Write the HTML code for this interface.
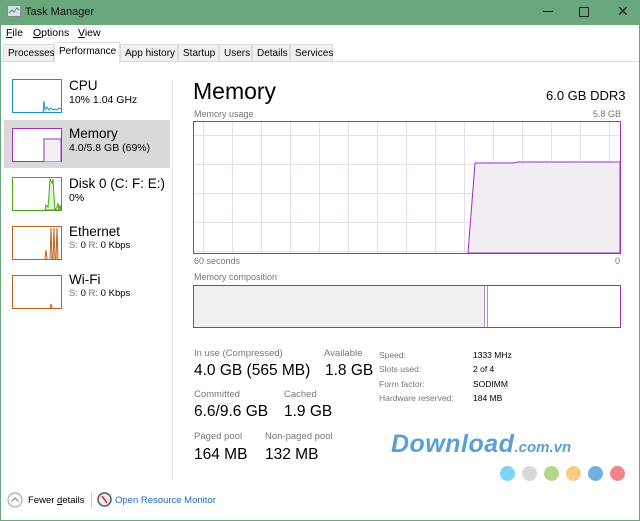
<!DOCTYPE html>
<html><head><meta charset="utf-8"><style>
*{margin:0;padding:0;box-sizing:border-box}
body{width:640px;height:521px;position:relative;background:#fff;font-family:"Liberation Sans",sans-serif;overflow:hidden;color:#000}
.a{position:absolute;white-space:nowrap}
.g{color:#777}
</style></head><body>
<div class="a" style="left:0;top:0;width:640px;height:25px;background:#6aa77c"></div>
<div class="a" style="left:0;top:25px;width:1px;height:496px;background:#6aa77c"></div>
<div class="a" style="left:639px;top:25px;width:1px;height:496px;background:#6aa77c"></div>
<div class="a" style="left:0;top:520px;width:640px;height:1px;background:#6aa77c"></div>
<svg class="a" style="left:7px;top:5px" width="14" height="13"><rect x="0.5" y="0.5" width="13" height="11" fill="#dde" stroke="#889"/><path d="M2 8 L5 5 L7 7 L10 3 L12 5" stroke="#2a6" fill="none"/></svg>
<div class="a" style="left:25px;top:6px;font-size:11px;color:#111">Task Manager</div>
<div class="a" style="left:543px;top:11px;width:10px;height:1px;background:#222"></div>
<div class="a" style="left:579px;top:7px;width:10px;height:10px;border:1px solid #222"></div>
<div class="a" style="left:617px;top:3px;font-size:14px;color:#222">✕</div>
<div class="a" style="left:6px;top:27px;font-size:10.5px"><u>F</u>ile</div>
<div class="a" style="left:33px;top:27px;font-size:10.5px"><u>O</u>ptions</div>
<div class="a" style="left:78px;top:27px;font-size:10.5px"><u>V</u>iew</div>
<div class="a" style="left:1px;top:61px;width:638px;height:1px;background:#ddd"></div>
<div class="a" style="left:1px;top:44px;width:637px;height:18px;font-size:10px">
<span class="a" style="left:2px;top:0;height:18px;width:51px;background:#f0f0f0;border:1px solid #ddd;padding:3px 0 0 4px">Processes</span>
<span class="a" style="left:53px;top:-2px;height:21px;width:66px;background:#fff;border:1px solid #ddd;border-bottom:none;padding:3px 0 0 4px">Performance</span>
<span class="a" style="left:119px;top:0;height:18px;width:58px;background:#f0f0f0;border:1px solid #ddd;padding:3px 0 0 4px">App history</span>
<span class="a" style="left:177px;top:0;height:18px;width:41px;background:#f0f0f0;border:1px solid #ddd;padding:3px 0 0 4px">Startup</span>
<span class="a" style="left:218px;top:0;height:18px;width:33px;background:#f0f0f0;border:1px solid #ddd;padding:3px 0 0 4px">Users</span>
<span class="a" style="left:251px;top:0;height:18px;width:38px;background:#f0f0f0;border:1px solid #ddd;padding:3px 0 0 4px">Details</span>
<span class="a" style="left:289px;top:0;height:18px;width:43px;background:#f0f0f0;border:1px solid #ddd;padding:3px 0 0 4px">Services</span>
</div>
<div class="a" style="left:172px;top:80px;width:1px;height:400px;background:#e6e6e6"></div>
<svg class="a" style="left:12px;top:79px" width="50" height="34"><rect x="0.5" y="0.5" width="49" height="33" fill="#fff" stroke="#1c8ccc"/><path d="M31 33 L32 22 L33 31 L35 28 L37 31 L39 29 L41 31 L43 30 L45 31 L47 29 L49 30" stroke="#1c8ccc" fill="none"/></svg>
<div class="a" style="left:69px;top:78px;font-size:13.5px">CPU</div>
<div class="a" style="left:69px;top:94px;font-size:10.5px">10% 1.04 GHz</div>
<div class="a" style="left:4px;top:120px;width:166px;height:48px;background:#d9d9d9"></div>
<svg class="a" style="left:12px;top:128px" width="50" height="34"><rect x="0.5" y="0.5" width="49" height="33" fill="#fff" stroke="#9b2fc4"/><path d="M32 34 L32 11 L49 11 L49 34 Z" fill="#f3f0f5" stroke="#9b2fc4"/></svg>
<div class="a" style="left:69px;top:126px;font-size:13.5px">Memory</div>
<div class="a" style="left:69px;top:142px;font-size:10.5px">4.0/5.8 GB (69%)</div>
<svg class="a" style="left:12px;top:177px" width="50" height="34"><rect x="0.5" y="0.5" width="49" height="33" fill="#fff" stroke="#4da618"/><path d="M33 33 L34 28 L36 30 L37 18 L38 2 L40 6 L41 2 L42 18 L43 33 L45 30 L46 26 L47 33 L48 28 L49 33 Z" fill="#dff0d6" stroke="#4da618"/></svg>
<div class="a" style="left:69px;top:176px;font-size:13.5px">Disk 0 (C: F: E:)</div>
<div class="a" style="left:69px;top:192px;font-size:10.5px">0%</div>
<svg class="a" style="left:12px;top:226px" width="50" height="34"><rect x="0.5" y="0.5" width="49" height="33" fill="#fff" stroke="#c0601a"/><path d="M33 33 L34 24 L35 33 M38 33 L39 2 L40 33 M41 33 L42 2 L43 33 M44 33 L45 2 L46 33" stroke="#c0601a" fill="none"/></svg>
<div class="a" style="left:69px;top:224px;font-size:13.5px">Ethernet</div>
<div class="a" style="left:69px;top:240px;font-size:9.5px"><span class="g">S:</span> 0 <span class="g">R:</span> 0 Kbps</div>
<svg class="a" style="left:12px;top:275px" width="50" height="34"><rect x="0.5" y="0.5" width="49" height="33" fill="#fff" stroke="#c0601a"/><path d="M38 33 L39 29 L40 33" stroke="#c0601a" fill="none"/></svg>
<div class="a" style="left:69px;top:272px;font-size:13.5px">Wi-Fi</div>
<div class="a" style="left:69px;top:288px;font-size:9.5px"><span class="g">S:</span> 0 <span class="g">R:</span> 0 Kbps</div>
<div class="a" style="left:193px;top:78px;font-size:23px">Memory</div>
<div class="a" style="left:546px;top:88px;font-size:13px">6.0 GB DDR3</div>
<div class="a g" style="left:194px;top:109px;font-size:9px">Memory usage</div>
<div class="a g" style="left:593px;top:109px;font-size:9px">5.8 GB</div>
<svg class="a" style="left:193px;top:121px" width="428" height="133">
<g stroke="#e6dfea" stroke-width="1">
<path d="M10.5 0V133M39.5 0V133M68.5 0V133M97.5 0V133M126.5 0V133M155.5 0V133M184.5 0V133M213.5 0V133M242.5 0V133M271.5 0V133M300.5 0V133M329.5 0V133M358.5 0V133M387.5 0V133M416.5 0V133"/>
<path d="M0 14.5H428M0 43.5H428M0 72.5H428M0 101.5H428M0 130.5H428"/>
</g>
<path d="M275 132 L282 42 L320 42 L325 41 L427 41 L427 132 Z" fill="#f1edf3" stroke="#9b2fc4"/>
<rect x="0.5" y="0.5" width="427" height="132" fill="none" stroke="#9b2fc4"/>
</svg>
<div class="a g" style="left:194px;top:256px;font-size:9px">60 seconds</div>
<div class="a g" style="left:615px;top:256px;font-size:9px">0</div>
<div class="a g" style="left:194px;top:272px;font-size:9px">Memory composition</div>
<svg class="a" style="left:193px;top:285px" width="428" height="43"><rect x="1" y="1" width="291" height="41" fill="#f1eff2"/><path d="M291.5 1V42M294.5 1V42" stroke="#b98ad0"/><rect x="0.5" y="0.5" width="427" height="42" fill="none" stroke="#9b2fc4"/></svg>
<div class="a g" style="left:194px;top:348px;font-size:9.5px">In use (Compressed)</div>
<div class="a" style="left:194px;top:362px;font-size:15.5px">4.0 GB (565 MB)</div>
<div class="a g" style="left:324px;top:348px;font-size:9.5px">Available</div>
<div class="a" style="left:325px;top:362px;font-size:15.5px">1.8 GB</div>
<div class="a g" style="left:194px;top:389px;font-size:9.5px">Committed</div>
<div class="a" style="left:194px;top:403px;font-size:15.5px">6.6/9.6 GB</div>
<div class="a g" style="left:284px;top:389px;font-size:9.5px">Cached</div>
<div class="a" style="left:284px;top:403px;font-size:15.5px">1.9 GB</div>
<div class="a g" style="left:194px;top:431px;font-size:9.5px">Paged pool</div>
<div class="a" style="left:194px;top:446px;font-size:15.5px">164 MB</div>
<div class="a g" style="left:265px;top:431px;font-size:9.5px">Non-paged pool</div>
<div class="a" style="left:265px;top:446px;font-size:15.5px">132 MB</div>
<div class="a g" style="left:379px;top:348px;font-size:8.5px;line-height:14.3px">Speed:<br>Slots used:<br>Form factor:<br>Hardware reserved:</div>
<div class="a" style="left:473px;top:348px;font-size:8.5px;line-height:14.3px">1333 MHz<br>2 of 4<br>SODIMM<br>184 MB</div>
<div class="a" style="left:391px;top:430px;font-size:25px;font-weight:bold;font-style:italic;color:#5a9fd6;letter-spacing:0.5px">Download<span style="font-size:15px;letter-spacing:0">.com.vn</span></div>
<div class="a" style="left:500px;top:466px;width:15px;height:15px;border-radius:50%;background:#7fd3f7"></div>
<div class="a" style="left:522px;top:466px;width:15px;height:15px;border-radius:50%;background:#d8d8d8"></div>
<div class="a" style="left:544px;top:466px;width:15px;height:15px;border-radius:50%;background:#b3d88c"></div>
<div class="a" style="left:566px;top:466px;width:15px;height:15px;border-radius:50%;background:#fbcb85"></div>
<div class="a" style="left:588px;top:466px;width:15px;height:15px;border-radius:50%;background:#73b0de"></div>
<div class="a" style="left:610px;top:466px;width:15px;height:15px;border-radius:50%;background:#f3848c"></div>
<svg class="a" style="left:7px;top:492px" width="16" height="16"><circle cx="8" cy="8" r="7" fill="#fff" stroke="#999"/><path d="M4.5 9.5 L8 6 L11.5 9.5" stroke="#777" fill="none"/></svg>
<div class="a" style="left:28px;top:495px;font-size:9.5px">Fewer <u>d</u>etails</div>
<div class="a" style="left:91px;top:492px;width:1px;height:16px;background:#ccc"></div>
<svg class="a" style="left:97px;top:492px" width="15" height="15"><circle cx="7.5" cy="7.5" r="6.5" fill="#eee" stroke="#555" stroke-width="1.5"/><path d="M5 4 L10 11" stroke="#c22" stroke-width="1.5"/></svg>
<div class="a" style="left:115px;top:495px;font-size:9.5px;color:#1b6ac9">Open Resource Monitor</div>
</body></html>
